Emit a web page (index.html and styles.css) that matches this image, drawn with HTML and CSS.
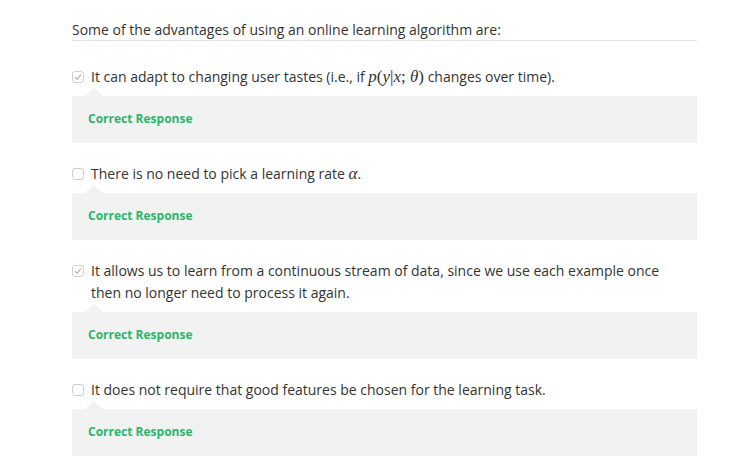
FILE: index.html
```html
<!DOCTYPE html>
<html>
<head>
<meta charset="utf-8">
<link rel="stylesheet" href="styles.css">
</head>
<body>
<div class="quiz">
  <div class="prompt">Some of the advantages of using an online learning algorithm are:</div>
  <div class="options">
    <div class="option">
      <div class="choice">
        <span class="box checked"><svg viewBox="0 0 12 12" width="12" height="12"><path d="M3 6.2 L5 8.3 L9 3.6" fill="none" stroke="#b5b5b5" stroke-width="1.3"/></svg></span>
        <span class="label">It can adapt to changing user tastes (i.e., if <span class="math">p</span><span class="mathup">(</span><span class="math">y</span><span class="mathup">|</span><span class="math">x</span><span class="mathup">; </span><span class="math">θ</span><span class="mathup">)</span> changes over time).</span>
      </div>
      <div class="feedback">Correct Response</div>
    </div>
    <div class="option">
      <div class="choice">
        <span class="box"></span>
        <span class="label">There is no need to pick a learning rate <span class="math">α</span>.</span>
      </div>
      <div class="feedback">Correct Response</div>
    </div>
    <div class="option">
      <div class="choice">
        <span class="box checked"><svg viewBox="0 0 12 12" width="12" height="12"><path d="M3 6.2 L5 8.3 L9 3.6" fill="none" stroke="#b5b5b5" stroke-width="1.3"/></svg></span>
        <span class="label">It allows us to learn from a continuous stream of data, since we use each example once then no longer need to process it again.</span>
      </div>
      <div class="feedback">Correct Response</div>
    </div>
    <div class="option">
      <div class="choice">
        <span class="box"></span>
        <span class="label">It does not require that good features be chosen for the learning task.</span>
      </div>
      <div class="feedback">Correct Response</div>
    </div>
  </div>
</div>
</body>
</html>
```
FILE: styles.css
```css
html, body {
  margin: 0;
  padding: 0;
  background: #ffffff;
}
body {
  font-family: "Open Sans", "Liberation Sans", sans-serif;
  color: #333333;
  font-size: 14px;
}
.quiz {
  width: 625px;
  margin-left: 72px;
  padding-top: 20px;
}
.prompt {
  line-height: 20px;
  border-bottom: 1px solid #e3e3e3;
}
.options {
  display: flex;
  flex-direction: column;
  gap: 20px;
  padding-top: 25px;
}
.choice {
  display: flex;
  align-items: flex-start;
  line-height: 22px;
}
.box {
  flex: none;
  width: 12px;
  height: 12px;
  box-sizing: border-box;
  border: 1px solid #cfcfcf;
  border-radius: 3px;
  margin-top: 5px;
  margin-right: 7px;
  display: flex;
  align-items: center;
  justify-content: center;
  background: #fff;
}
.box svg {
  display: block;
  margin: -1px;
}
.label {
  flex: 1;
  padding-right: 30px;
}
.math {
  font-family: "Liberation Serif", "DejaVu Serif", serif;
  font-style: italic;
  font-size: 17px;
}
.mathup {
  font-family: "Liberation Serif", "DejaVu Serif", serif;
  font-size: 17px;
}
.feedback {
  position: relative;
  margin-top: 8px;
  background: #f2f2f2;
  padding: 13px 16px 14px;
  line-height: 20px;
  font-size: 12px;
  font-weight: 700;
  color: #2bb66a;
}
.feedback::before {
  content: "";
  position: absolute;
  left: 13px;
  top: -8px;
  border-left: 9px solid transparent;
  border-right: 9px solid transparent;
  border-bottom: 8px solid #f2f2f2;
}
```
